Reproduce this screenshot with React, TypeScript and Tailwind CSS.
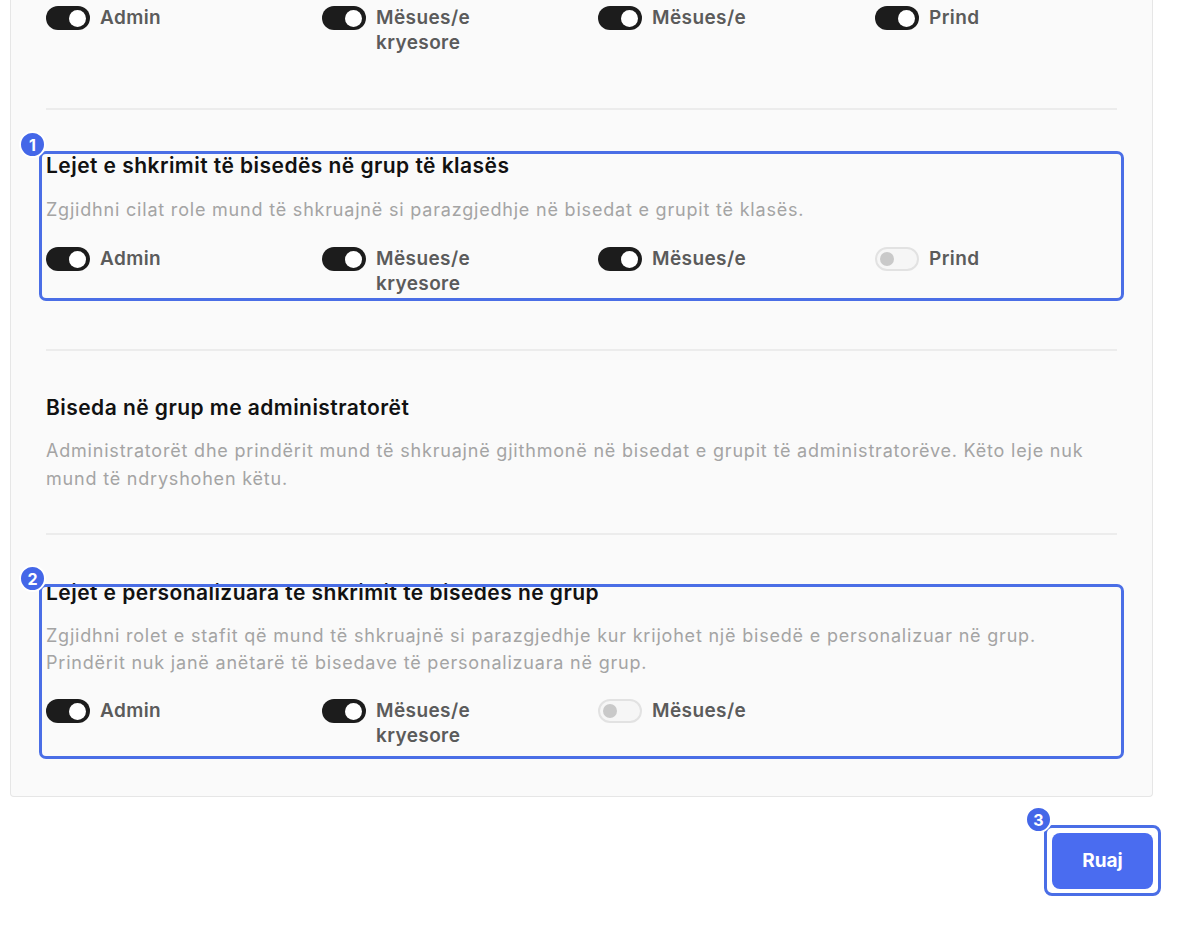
import React from 'react';

type Role = { label: string; on: boolean };

function Toggle({ on }: { on: boolean }) {
  if (on) {
    return (
      <span className="relative mt-[1px] inline-flex h-[24px] w-[44px] shrink-0 items-center justify-end rounded-full bg-[#1c1c1c] pr-[4px]">
        <span className="h-[17px] w-[17px] rounded-full bg-white" />
      </span>
    );
  }
  return (
    <span className="relative mt-[1px] inline-flex h-[24px] w-[44px] shrink-0 items-center justify-start rounded-full border-2 border-[#e2e2e2] bg-[#f6f6f6] pl-[3px]">
      <span className="h-[14px] w-[14px] rounded-full bg-[#c9c9c9]" />
    </span>
  );
}

function RoleRow({ roles }: { roles: Role[] }) {
  return (
    <div className="grid grid-cols-[276px_276px_277px_240px]">
      {roles.map((r, i) => (
        <div key={i} className="flex items-start gap-[10px]">
          <Toggle on={r.on} />
          <span className="max-w-[130px] text-[19px] font-semibold leading-[25px] tracking-[0.4px] text-[#5b5b5b]">
            {r.label}
          </span>
        </div>
      ))}
    </div>
  );
}

function Badge({ n, className }: { n: number; className: string }) {
  return (
    <span
      className={`absolute z-20 flex h-[27px] w-[27px] items-center justify-center rounded-full border-2 border-white bg-[#4467e8] text-[16px] font-bold text-white ${className}`}
    >
      {n}
    </span>
  );
}

function Divider() {
  return <div className="h-[2px] bg-[#ececec]" />;
}

function Title({ children }: { children: React.ReactNode }) {
  return <h2 className="text-[21px] font-semibold leading-[28px] tracking-[0.45px] text-[#111111]">{children}</h2>;
}

export default function App() {
  const font = { fontFamily: 'Inter, "Noto Sans", sans-serif' };
  return (
    <div className="min-h-[935px] w-[1200px] bg-white" style={font}>
      <div className="ml-[10px] w-[1143px] rounded-b-[4px] border-x border-b border-[#e6e6e6] bg-[#fafafa] pl-[35px] pr-[35px]">
        {/* cut-off section above */}
        <div className="pt-[5px] pb-[53px]">
          <RoleRow
            roles={[
              { label: 'Admin', on: true },
              { label: 'Mësues/e kryesore', on: true },
              { label: 'Mësues/e', on: true },
              { label: 'Prind', on: true },
            ]}
          />
        </div>
        <Divider />

        {/* class group chat */}
        <div className="pt-[42px] pb-[53px]">
          <div className="relative">
            <div className="pointer-events-none absolute -left-[7px] -right-[7px] -top-[1px] -bottom-[5px] z-10 rounded-[7px] border-[3px] border-[#4a6ee6]" />
            <Badge n={1} className="-left-[27px] -top-[21px]" />
            <Title>Lejet e shkrimit të bisedës në grup të klasës</Title>
            <p className="mt-[16px] text-[18px] leading-[28px] tracking-[0.8px] text-[#a4a4a4]">
              Zgjidhni cilat role mund të shkruajnë si parazgjedhje në bisedat e grupit të klasës.
            </p>
            <div className="mt-[22px]">
              <RoleRow
                roles={[
                  { label: 'Admin', on: true },
                  { label: 'Mësues/e kryesore', on: true },
                  { label: 'Mësues/e', on: true },
                  { label: 'Prind', on: false },
                ]}
              />
            </div>
          </div>
        </div>
        <Divider />

        {/* admin group chat */}
        <div className="pt-[43px] pb-[40px]">
          <Title>Biseda në grup me administratorët</Title>
          <p className="mt-[15px] text-[18px] leading-[28px] tracking-[0.8px] text-[#a4a4a4]">
            Administratorët dhe prindërit mund të shkruajnë gjithmonë në bisedat e grupit të administratorëve. Këto leje nuk mund të ndryshohen këtu.
          </p>
        </div>
        <Divider />

        {/* custom group chat */}
        <div className="pt-[44px] pb-[48px]">
          <div className="relative">
            <div className="pointer-events-none absolute -left-[7px] -right-[7px] top-[5px] -bottom-[11px] z-10 rounded-[7px] border-[3px] border-[#4a6ee6]" />
            <Badge n={2} className="-left-[27px] -top-[14px]" />
            <Title>Lejet e personalizuara të shkrimit të bisedës në grup</Title>
            <p className="mt-[15px] text-[18px] leading-[27px] tracking-[0.8px] text-[#a4a4a4]">
              Zgjidhni rolet e stafit që mund të shkruajnë si parazgjedhje kur krijohet një bisedë e personalizuar në grup.
              <br />
              Prindërit nuk janë anëtarë të bisedave të personalizuara në grup.
            </p>
            <div className="mt-[22px]">
              <RoleRow
                roles={[
                  { label: 'Admin', on: true },
                  { label: 'Mësues/e kryesore', on: true },
                  { label: 'Mësues/e', on: false },
                ]}
              />
            </div>
          </div>
        </div>
      </div>

      <div className="ml-[10px] flex w-[1143px] justify-end pt-[36px]">
        <div className="relative">
          <div className="pointer-events-none absolute -left-[8px] -right-[8px] -top-[8px] -bottom-[7px] rounded-[8px] border-[3px] border-[#4a6ee6]" />
          <Badge n={3} className="-left-[27px] -top-[27px]" />
          <button className="flex h-[56px] w-[101px] items-center justify-center rounded-[8px] bg-[#4a6cf0] text-[19px] font-bold text-white">
            Ruaj
          </button>
        </div>
      </div>
    </div>
  );
}
